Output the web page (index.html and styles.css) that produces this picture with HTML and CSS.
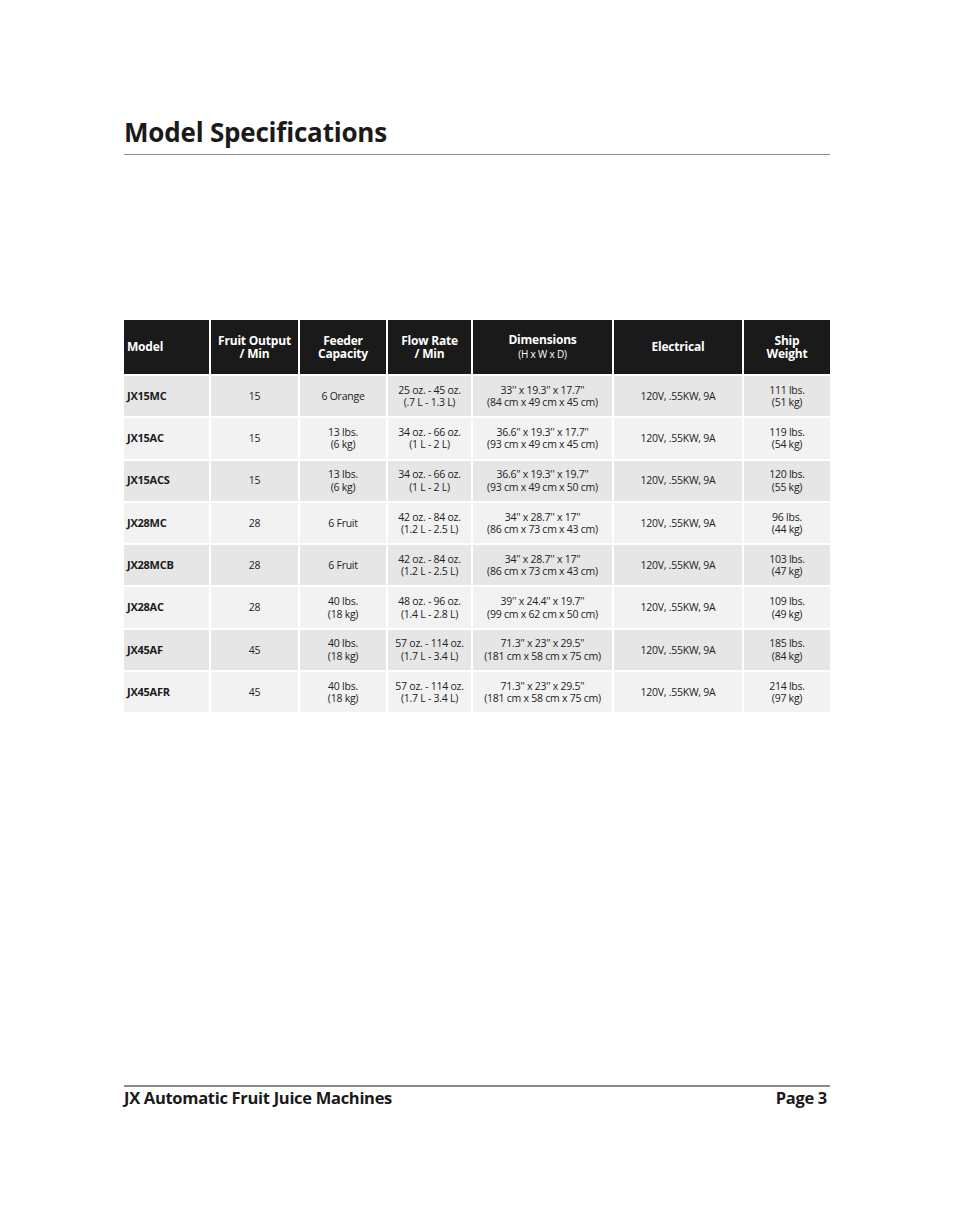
FILE: index.html
```html
<!DOCTYPE html>
<html lang="en">
<head>
<meta charset="utf-8">
<title>Model Specifications</title>
<link rel="stylesheet" href="styles.css">
</head>
<body>
<div class="page">
  <header class="title-block">
    <h1 class="title">Model Specifications</h1>
    <div class="rule"></div>
  </header>

  <div class="specs">
    <div class="hd left">Model</div>
    <div class="hd">Fruit Output<br>/ Min</div>
    <div class="hd">Feeder<br>Capacity</div>
    <div class="hd">Flow Rate<br>/ Min</div>
    <div class="hd">Dimensions<span class="sub">(H x W x D)</span></div>
    <div class="hd">Electrical</div>
    <div class="hd">Ship<br>Weight</div>

    <div class="c odd model">JX15MC</div>
    <div class="c odd">15</div>
    <div class="c odd">6 Orange</div>
    <div class="c odd">25 oz. - 45 oz.<br>(.7 L - 1.3 L)</div>
    <div class="c odd">33'' x 19.3'' x 17.7''<br>(84 cm x 49 cm x 45 cm)</div>
    <div class="c odd">120V, .55KW, 9A</div>
    <div class="c odd">111 lbs.<br>(51 kg)</div>

    <div class="c even model">JX15AC</div>
    <div class="c even">15</div>
    <div class="c even">13 lbs.<br>(6 kg)</div>
    <div class="c even">34 oz. - 66 oz.<br>(1 L - 2 L)</div>
    <div class="c even">36.6'' x 19.3'' x 17.7''<br>(93 cm x 49 cm x 45 cm)</div>
    <div class="c even">120V, .55KW, 9A</div>
    <div class="c even">119 lbs.<br>(54 kg)</div>

    <div class="c odd model">JX15ACS</div>
    <div class="c odd">15</div>
    <div class="c odd">13 lbs.<br>(6 kg)</div>
    <div class="c odd">34 oz. - 66 oz.<br>(1 L - 2 L)</div>
    <div class="c odd">36.6'' x 19.3'' x 19.7''<br>(93 cm x 49 cm x 50 cm)</div>
    <div class="c odd">120V, .55KW, 9A</div>
    <div class="c odd">120 lbs.<br>(55 kg)</div>

    <div class="c even model">JX28MC</div>
    <div class="c even">28</div>
    <div class="c even">6 Fruit</div>
    <div class="c even">42 oz. - 84 oz.<br>(1.2 L - 2.5 L)</div>
    <div class="c even">34'' x 28.7'' x 17''<br>(86 cm x 73 cm x 43 cm)</div>
    <div class="c even">120V, .55KW, 9A</div>
    <div class="c even">96 lbs.<br>(44 kg)</div>

    <div class="c odd model">JX28MCB</div>
    <div class="c odd">28</div>
    <div class="c odd">6 Fruit</div>
    <div class="c odd">42 oz. - 84 oz.<br>(1.2 L - 2.5 L)</div>
    <div class="c odd">34'' x 28.7'' x 17''<br>(86 cm x 73 cm x 43 cm)</div>
    <div class="c odd">120V, .55KW, 9A</div>
    <div class="c odd">103 lbs.<br>(47 kg)</div>

    <div class="c even model">JX28AC</div>
    <div class="c even">28</div>
    <div class="c even">40 lbs.<br>(18 kg)</div>
    <div class="c even">48 oz. - 96 oz.<br>(1.4 L - 2.8 L)</div>
    <div class="c even">39'' x 24.4'' x 19.7''<br>(99 cm x 62 cm x 50 cm)</div>
    <div class="c even">120V, .55KW, 9A</div>
    <div class="c even">109 lbs.<br>(49 kg)</div>

    <div class="c odd model">JX45AF</div>
    <div class="c odd">45</div>
    <div class="c odd">40 lbs.<br>(18 kg)</div>
    <div class="c odd">57 oz. - 114 oz.<br>(1.7 L - 3.4 L)</div>
    <div class="c odd">71.3'' x 23'' x 29.5''<br>(181 cm x 58 cm x 75 cm)</div>
    <div class="c odd">120V, .55KW, 9A</div>
    <div class="c odd">185 lbs.<br>(84 kg)</div>

    <div class="c even model">JX45AFR</div>
    <div class="c even">45</div>
    <div class="c even">40 lbs.<br>(18 kg)</div>
    <div class="c even">57 oz. - 114 oz.<br>(1.7 L - 3.4 L)</div>
    <div class="c even">71.3'' x 23'' x 29.5''<br>(181 cm x 58 cm x 75 cm)</div>
    <div class="c even">120V, .55KW, 9A</div>
    <div class="c even">214 lbs.<br>(97 kg)</div>
  </div>

  <footer class="footer">
    <div class="footer-rule"></div>
    <div class="footer-text">
      <span>JX Automatic Fruit Juice Machines</span>
      <span>Page 3</span>
    </div>
  </footer>
</div>
</body>
</html>
```

FILE: styles.css
```css
html, body {
  margin: 0;
  padding: 0;
  background: #ffffff;
}

body {
  font-family: "Open Sans", "DejaVu Sans", sans-serif;
  color: #1a1a1a;
}

.page {
  width: 706px;
  margin-left: 124px;
  padding-top: 114px;
  height: 995px;
  display: flex;
  flex-direction: column;
}

.title {
  margin: 0;
  font-size: 26px;
  font-weight: 700;
  line-height: 37px;
  letter-spacing: -0.2px;
  color: #1a1a1a;
}

.rule {
  height: 1px;
  background: #8a8a8a;
  margin-top: 3px;
}

.specs {
  margin-top: 165px;
  display: grid;
  grid-template-columns: 85px 87px 86px 83px 139px 128px 86px;
  grid-template-rows: 54px repeat(8, 40.3px);
  gap: 2px;
  font-size: 10.5px;
  line-height: 12.5px;
  letter-spacing: -0.25px;
}

.hd {
  background: #1a1a1a;
  color: #ffffff;
  font-weight: 700;
  font-size: 12px;
  line-height: 13.5px;
  letter-spacing: -0.2px;
  display: flex;
  flex-direction: column;
  align-items: center;
  justify-content: center;
  text-align: center;
}

.hd.left {
  align-items: flex-start;
  padding-left: 3px;
}

.sub {
  font-weight: 400;
  font-size: 10px;
  line-height: 14px;
}

.c {
  display: flex;
  align-items: center;
  justify-content: center;
  text-align: center;
  color: #222222;
}

.odd { background: #e6e6e6; }
.even { background: #f2f2f2; }

.model {
  justify-content: flex-start;
  padding-left: 3px;
  font-weight: 700;
  font-size: 11px;
  color: #1a1a1a;
}

.footer {
  margin-top: auto;
}

.footer-rule {
  height: 2px;
  background: #8a8a8a;
}

.footer-text {
  display: flex;
  justify-content: space-between;
  font-size: 16.5px;
  font-weight: 700;
  line-height: 22px;
  letter-spacing: -0.3px;
  padding: 0 3px 0 0;
  color: #1a1a1a;
}
```
